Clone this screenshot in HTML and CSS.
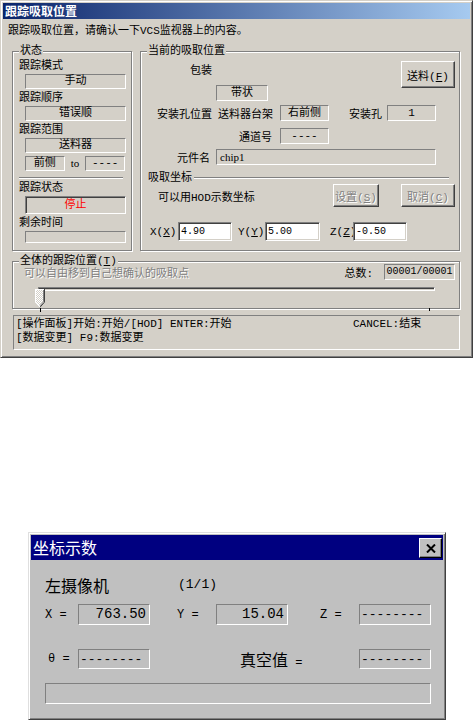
FILE: index.html
```html
<!DOCTYPE html>
<html>
<head>
<meta charset="utf-8">
<link rel="stylesheet" href="styles.css">
<title>跟踪吸取位置</title>
</head>
<body>

<div class="dlg">
  <div class="caption">跟踪吸取位置</div>
  <div class="intro">跟踪吸取位置，请确认一下VCS监视器上的内容。</div>

  <div class="groups">
    <fieldset class="grp state">
      <legend>状态</legend>
      <div class="lbl">跟踪模式</div>
      <div class="stat">手动</div>
      <div class="lbl">跟踪顺序</div>
      <div class="stat">错误顺</div>
      <div class="lbl">跟踪范围</div>
      <div class="stat">送料器</div>
      <div class="range">
        <div class="stat short">前侧</div>
        <div class="to">to</div>
        <div class="stat short">----</div>
      </div>
      <div class="sep"></div>
      <div class="lbl">跟踪状态</div>
      <div class="stat run">停止</div>
      <div class="lbl">剩余时间</div>
      <div class="stat thin"></div>
    </fieldset>

    <fieldset class="grp pick">
      <legend>当前的吸取位置</legend>
      <div class="row pack">
        <div class="pack-l">
          <div class="pack-lbl">包装</div>
          <div class="val pack-val">带状</div>
        </div>
        <button class="btn feed">送料(<u>F</u>)</button>
      </div>
      <div class="row slot">
        <span class="c-slot">安装孔位置</span>
        <span class="c-rack">送料器台架</span>
        <div class="val">右前侧</div>
        <span class="c-hole">安装孔</span>
        <div class="val">1</div>
      </div>
      <div class="row chan">
        <span class="c-chan">通道号</span>
        <div class="val">----</div>
      </div>
      <div class="row part">
        <span class="c-part">元件名</span>
        <div class="val wide">chip1</div>
      </div>
      <div class="row sub">
        <span class="sub-lbl">吸取坐标</span>
        <div class="rule"></div>
      </div>
      <div class="row hod">
        <span class="c-hod">可以用HOD示数坐标</span>
        <button class="btn off set">设置(<u>S</u>)</button>
        <button class="btn off cancel">取消(<u>C</u>)</button>
      </div>
      <div class="row xyz">
        <span class="c-x">X(<u>X</u>)</span>
        <div class="edit">4.90</div>
        <span class="c-y">Y(<u>Y</u>)</span>
        <div class="edit ey">5.00</div>
        <span class="c-z">Z(<u>Z</u>)</span>
        <div class="edit">-0.50</div>
      </div>
    </fieldset>
  </div>

  <fieldset class="grp whole">
    <legend>全体的跟踪位置(<u>T</u>)</legend>
    <div class="whole-top">
      <span class="hint">可以自由移到自己想确认的吸取点</span>
      <span class="total-lbl">总数:</span>
      <div class="total">00001/00001</div>
    </div>
    <div class="slider">
      <div class="channel"></div>
      <svg class="thumb" width="10" height="19" viewBox="0 0 10 19">
        <defs>
          <pattern id="dith" width="2" height="2" patternUnits="userSpaceOnUse">
            <rect width="2" height="2" fill="#d4d0c8"/>
            <rect width="1" height="1" fill="#fff"/>
            <rect x="1" y="1" width="1" height="1" fill="#fff"/>
          </pattern>
        </defs>
        <polygon points="0,0 10,0 10,13 5,18.5 0,13" fill="url(#dith)"/>
        <polyline points="0.5,13.5 0.5,0.5 9,0.5" fill="none" stroke="#fff"/>
        <polyline points="9.5,0 9.5,13.2 5,18.2" fill="none" stroke="#404040"/>
        <polyline points="8.5,1 8.5,12.8 5,16.8" fill="none" stroke="#808080"/>
        <polyline points="0.5,13.2 5,18" fill="none" stroke="#fff"/>
      </svg>
      <span class="tick first"></span>
      <span class="tick last"></span>
    </div>
  </fieldset>

  <div class="status">
    <div class="status-row">
      <span class="status-main">[操作面板]开始:开始/[HOD] ENTER:开始</span>
      <span>CANCEL:结束</span>
    </div>
    <div>[数据变更] F9:数据变更</div>
  </div>
</div>

<div class="coord">
  <div class="coord-cap">
    <span class="coord-title">坐标示数</span>
    <span class="close">
      <svg width="10" height="9" viewBox="0 0 10 9"><path d="M1 0.5 L9 8.5 M9 0.5 L1 8.5" stroke="#000" stroke-width="2"/></svg>
    </span>
  </div>
  <div class="cam">
    <span class="cam-name">左摄像机</span>
    <span class="cam-page">(1/1)</span>
  </div>
  <div class="coord-row r1">
    <span class="k kx">X =</span>
    <div class="num">763.50</div>
    <span class="k ky">Y =</span>
    <div class="num">15.04</div>
    <span class="k kz">Z =</span>
    <div class="num dash">--------</div>
  </div>
  <div class="coord-row r2">
    <span class="k kt">θ =</span>
    <div class="num dash">--------</div>
    <span class="k kv"><span class="cjk">真空值</span> =</span>
    <div class="num dash">--------</div>
  </div>
  <div class="bar"></div>
</div>

</body>
</html>
```

FILE: styles.css
```css
body
{
  margin: 0;
  background: #fff;
  font-family: "Liberation Mono", "Noto Sans CJK SC", monospace;
  font-size: 11px;
  color: #000;
}
u { text-decoration: underline; }

/* ---- tracking dialog ---- */
.dlg
{
  width: 473px; height: 358px;
  box-sizing: border-box;
  padding: 2px;
  background: #d4d0c8;
  border: 1px solid;
  border-color: #d4d0c8 #404040 #404040 #d4d0c8;
  box-shadow: inset 1px 1px 0 #fff, inset -1px -1px 0 #808080;
}
.caption
{
  height: 16px;
  padding-left: 2px;
  background: linear-gradient(to right, #0a246a, #a6caf0);
  color: #fff;
  font-family: "Noto Sans CJK SC", sans-serif;
  font-weight: bold;
  font-size: 12px;
  line-height: 16px;
}
.intro { margin: 6px 0 0 5px; line-height: 12px; }

.groups { display: flex; gap: 8px; margin: 8px 0 0 9px; }

.grp
{
  margin: 0; min-width: 0;
  box-sizing: border-box;
  padding: 0 6px;
  border: 1px solid #808080;
  box-shadow: inset 1px 1px 0 #fff, 1px 1px 0 #fff;
}
.grp legend
{
  padding: 0 1px;
  line-height: 12px;
  background: #d4d0c8;
}

/* left: state */
.state { width: 120px; height: 206px; }
.lbl { margin-top: 3px; line-height: 12px; }
.stat
{
  box-sizing: border-box;
  width: 101px; height: 15px;
  margin: 2px 0 0 6px;
  border: 1px solid;
  border-color: #808080 #fff #fff #808080;
  text-align: center;
  line-height: 13px;
}
.range { display: flex; margin: 3px 0 0 6px; }
.range .stat { margin: 0; width: 40px; }
.to { width: 21px; text-align: center; line-height: 15px; font-family: "Liberation Serif", serif; }
.sep
{
  height: 2px; margin: 6px 2px 0 0;
  box-sizing: border-box;
  border-top: 1px solid #808080;
  border-bottom: 1px solid #fff;
}
.stat.run
{
  height: 18px;
  color: #f00;
  line-height: 16px;
  box-shadow: inset 1px 1px 0 #404040, inset -1px -1px 0 #d4d0c8;
}
.stat.thin { height: 12px; }

/* right: pick position */
.pick { width: 320px; height: 206px; padding: 0 0 0 6px; }
.row { display: flex; align-items: center; }
.val
{
  box-sizing: border-box;
  width: 49px; height: 16px;
  border: 1px solid;
  border-color: #808080 #fff #fff #808080;
  text-align: center;
  line-height: 14px;
}
.pack { margin-top: 4px; align-items: flex-start; }
.pack-l { width: 200px; }
.pack-lbl { margin: 4px 0 0 43px; line-height: 12px; }
.pack-val { margin: 8px 0 0 69px; width: 52px; }

.btn
{
  box-sizing: border-box;
  padding: 0;
  background: #d4d0c8;
  font: inherit;
  color: #000;
  border: 1px solid;
  border-color: #fff #404040 #404040 #fff;
  box-shadow: inset -1px -1px 0 #808080;
}
.btn.off { color: #808080; text-shadow: 1px 1px 0 #fff; }
.feed { margin: 0 4px 0 auto; width: 54px; height: 27px; }

.slot { margin-top: 4px; }
.c-slot { margin-left: 10px; width: 61px; }
.c-rack { width: 62px; }
.c-hole { margin-left: 20px; width: 38px; }

.chan { margin-top: 7px; }
.c-chan { width: 133px; box-sizing: border-box; padding-right: 8px; text-align: right; }

.part { margin-top: 5px; }
.c-part { width: 69px; box-sizing: border-box; padding-right: 6px; text-align: right; }
.val.wide { width: 220px; text-align: left; padding-left: 3px; font-family: "Liberation Serif", serif; }

.sub { margin-top: 7px; line-height: 12px; }
.sub-lbl { margin-left: 1px; }
.rule
{
  flex: 1;
  height: 2px; margin: 0 10px 0 2px;
  box-sizing: border-box;
  border-top: 1px solid #808080;
  border-bottom: 1px solid #fff;
}

.hod { height: 23px; }
.c-hod { width: 186px; box-sizing: border-box; padding-left: 11px; }
.set { width: 46px; height: 23px; }
.cancel { margin-left: 22px; width: 54px; height: 23px; }

.xyz { margin-top: 15px; }
.c-x { width: 31px; box-sizing: border-box; padding-left: 3px; }
.c-y { width: 33px; box-sizing: border-box; padding-left: 6px; }
.c-z { width: 33px; box-sizing: border-box; padding-left: 10px; }
.edit
{
  box-sizing: border-box;
  width: 54px; height: 19px;
  padding-left: 2px;
  background: #fff;
  border: 1px solid;
  border-color: #808080 #fff #fff #808080;
  box-shadow: inset 1px 1px 0 #404040, inset -1px -1px 0 #d4d0c8;
  font-size: 10px;
  line-height: 17px;
}
.edit.ey { width: 55px; }

/* whole range */
.whole { width: 448px; height: 54px; margin: 4px 0 0 9px; padding: 0 0 0 6px; }
.whole-top { display: flex; align-items: center; height: 16px; margin-top: -3px; }
.hint { margin-left: 5px; padding-top: 3px; color: #808080; text-shadow: 1px 1px 0 #fff; line-height: 12px; }
.total-lbl { margin-left: auto; }
.total
{
  box-sizing: border-box;
  width: 71px; height: 16px;
  margin: 0 4px 0 11px;
  border: 1px solid;
  border-color: #808080 #fff #fff #808080;
  text-align: center;
  font-size: 10px;
  line-height: 14px;
}
.slider { position: relative; width: 400px; height: 26px; margin-left: 16px; }
.channel
{
  box-sizing: border-box;
  width: 397px; height: 4px;
  margin: 7px 0 0 3px;
  border: 1px solid;
  border-color: #808080 #fff #fff #808080;
  box-shadow: inset 1px 1px 0 #404040;
}
.thumb { position: absolute; left: 0; top: 2px; }
.tick { position: absolute; top: 21px; width: 1px; height: 4px; background: #000; }
.tick.first { left: 5px; }
.tick.last { left: 394px; height: 3px; }

.status
{
  box-sizing: border-box;
  width: 447px; height: 35px;
  margin: 6px 0 0 10px;
  padding: 1px 0 0 2px;
  border: 1px solid;
  border-color: #808080 #fff #fff #808080;
  line-height: 14px;
}
.status-row { display: flex; }
.status-main { width: 337px; }

/* ---- coordinate readout ---- */
.coord
{
  width: 418px; height: 188px;
  box-sizing: border-box;
  margin: 174px 0 0 28px;
  padding: 2px;
  background: #c0c0c0;
  border: 1px solid;
  border-color: #dfdfdf #404040 #404040 #dfdfdf;
  box-shadow: inset 1px 1px 0 #fff, inset -1px -1px 0 #808080;
}
.coord-cap
{
  display: flex; align-items: center; justify-content: space-between;
  height: 25px;
  background: #000080;
}
.coord-title
{
  padding-left: 2px;
  color: #fff;
  font-family: "Noto Sans CJK SC", sans-serif;
  font-size: 16px;
  line-height: 25px;
}
.close
{
  display: flex; align-items: center; justify-content: center;
  box-sizing: border-box;
  width: 23px; height: 20px;
  margin: 1px 1px 0 0;
  background: #c0c0c0;
  border: 1px solid;
  border-color: #fff #000 #000 #fff;
  box-shadow: inset -1px -1px 0 #808080;
}
.cam { display: flex; margin: 17px 0 0 14px; line-height: 16px; }
.cam-name { width: 133px; font-family: "Noto Sans CJK SC", sans-serif; font-size: 16px; }
.cam-page { font-size: 13px; }

.coord-row { display: flex; align-items: center; margin-left: 14px; }
.coord-row.r1 { margin-top: 11px; height: 21px; }
.coord-row.r2 { margin-top: 24px; height: 20px; }
.k { box-sizing: border-box; font-size: 12px; }
.kx { width: 33px; }
.ky { width: 66px; padding-left: 27px; }
.kz { width: 71px; padding-left: 32px; }
.kt { width: 33px; padding-left: 3px; }
.kv { width: 209px; padding-left: 90px; }
.cjk { font-family: "Noto Sans CJK SC", sans-serif; font-size: 16px; }
.num
{
  box-sizing: border-box;
  width: 72px; height: 100%;
  padding-right: 3px;
  border: 1px solid;
  border-color: #808080 #fff #fff #808080;
  text-align: right;
  font-size: 14px;
  line-height: 19px;
}
.num.dash { text-align: left; padding: 0 0 0 1px; font-size: 13px; }
.bar
{
  box-sizing: border-box;
  width: 386px; height: 21px;
  margin: 14px 0 0 14px;
  border: 1px solid;
  border-color: #808080 #fff #fff #808080;
}
```
